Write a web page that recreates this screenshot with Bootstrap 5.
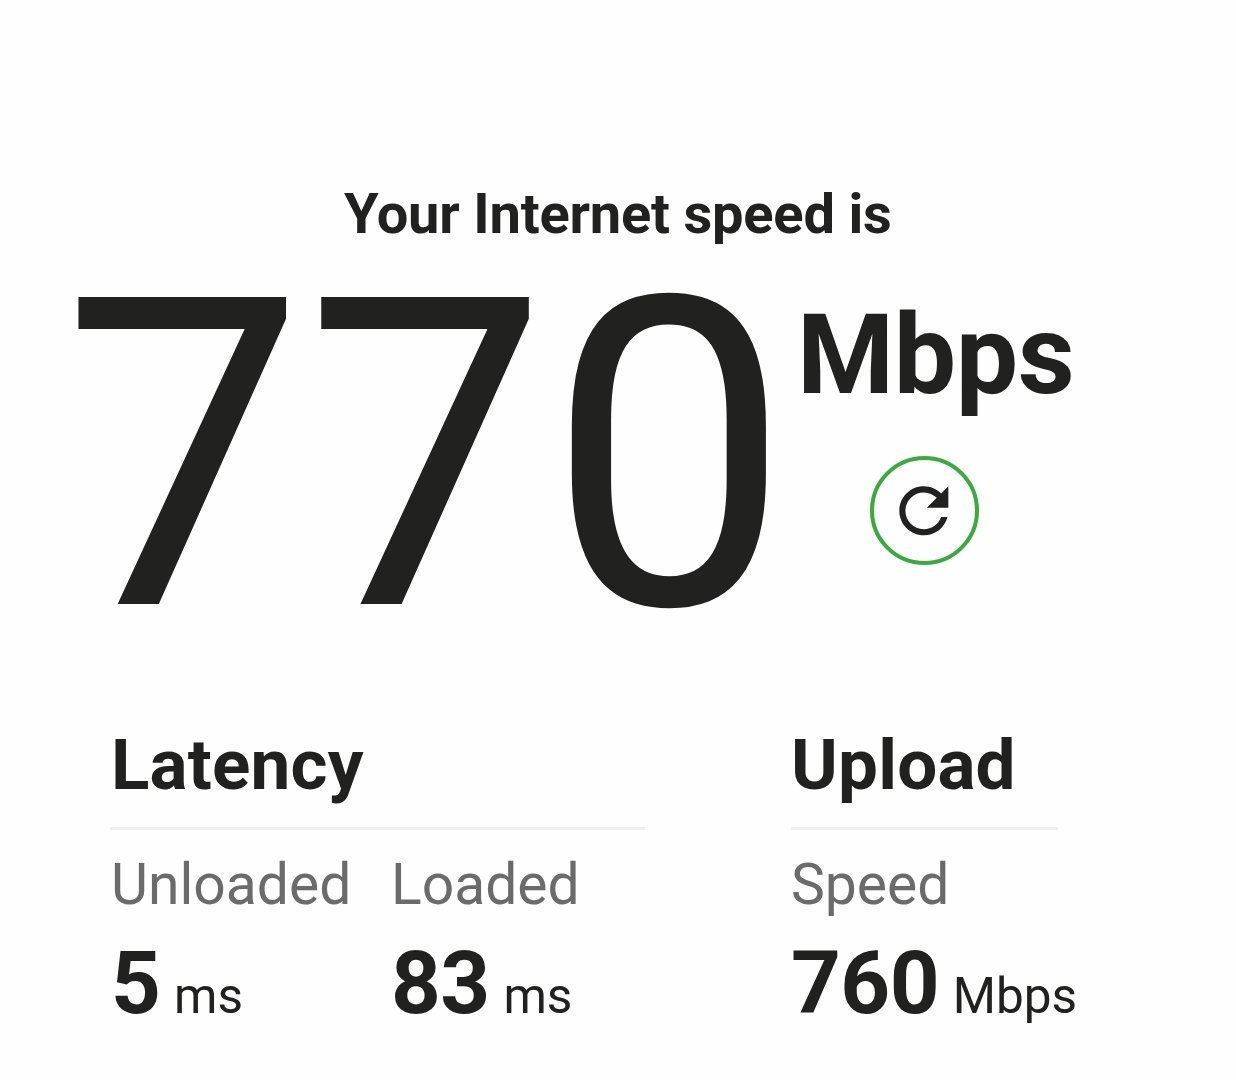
<!DOCTYPE html>
<html lang="en">
<head>
<meta charset="utf-8">
<meta name="viewport" content="width=device-width, initial-scale=1">
<title>Internet speed</title>
<link href="https://cdn.jsdelivr.net/npm/bootstrap@5.3.0/dist/css/bootstrap.min.css" rel="stylesheet">
<style>
body{font-family:Roboto,"Liberation Sans",sans-serif;color:#212120;background:#fefefe;overflow:hidden}
main{padding-top:181px}
.speed-title{font-size:56px;line-height:66px;font-weight:700;letter-spacing:-.2px;padding-left:344px}
.speed-main{margin-top:44px;padding-left:62px;height:330px}
.speed-value{font-size:432px;line-height:330px;width:735px}
.speed-side{padding-top:8px}
.speed-unit{font-size:111px;line-height:112px;font-weight:700;letter-spacing:-.4px}
.reload{width:109px;height:109px;margin:45px 0 0 72.5px;border:4px solid #43a548;box-shadow:0 0 3px #d5ffd5,inset 0 0 3px #d5ffd5}
.reload svg{width:73.6px;height:73.6px;flex:none}
.details{margin-top:104px;padding-left:110px;gap:146px}
.latency{width:535px}
.upload{width:267px}
.detail-head{font-size:71px;line-height:80px;font-weight:700;letter-spacing:.2px;padding-bottom:22px;border-bottom:3px solid #efefef}
.latency .detail-head{padding-left:1px}
.metric-label{font-size:57px;line-height:66px;margin-top:22px;color:#6b6b6b}
.metric-value{font-size:87px;line-height:90px;font-weight:700;letter-spacing:-.6px;margin-top:20px}
.metric-unit{font-size:49.5px;font-weight:400;letter-spacing:0;margin-left:1.5px}
.m-first{width:281px;padding-left:1px}
</style>
</head>
<body>
<main>
<h1 class="speed-title text-nowrap m-0"><span>Your Internet speed is</span></h1>
<section class="speed-main d-flex align-items-start">
<div class="speed-value text-nowrap"><span>770</span></div>
<div class="speed-side">
<div class="speed-unit"><span>Mbps</span></div>
<button class="reload rounded-circle bg-transparent p-0 d-flex align-items-center justify-content-center" type="button" aria-label="Restart">
<svg viewBox="0 0 24 24" fill="#212120"><path d="M17.65 6.35C16.2 4.9 14.21 4 12 4c-4.42 0-7.99 3.58-7.99 8s3.57 8 7.99 8c3.73 0 6.84-2.55 7.73-6h-2.08c-.82 2.33-3.04 4-5.65 4-3.31 0-6-2.69-6-6s2.69-6 6-6c1.66 0 3.14.69 4.22 1.78L13 11h7V4l-2.35 2.35z"/></svg>
</button>
</div>
</section>
<section class="details d-flex text-nowrap">
<div class="latency">
<h2 class="detail-head m-0"><span>Latency</span></h2>
<div class="d-flex">
<div class="m-first">
<div class="metric-label"><span>Unloaded</span></div>
<div class="metric-value">5<span class="metric-unit"> ms</span></div>
</div>
<div>
<div class="metric-label"><span>Loaded</span></div>
<div class="metric-value">83<span class="metric-unit"> ms</span></div>
</div>
</div>
</div>
<div class="upload">
<h2 class="detail-head m-0"><span>Upload</span></h2>
<div class="metric-label"><span>Speed</span></div>
<div class="metric-value">760<span class="metric-unit"> Mbps</span></div>
</div>
</section>
</main>
<script src="https://cdn.jsdelivr.net/npm/bootstrap@5.3.0/dist/js/bootstrap.bundle.min.js"></script>
</body>
</html>
